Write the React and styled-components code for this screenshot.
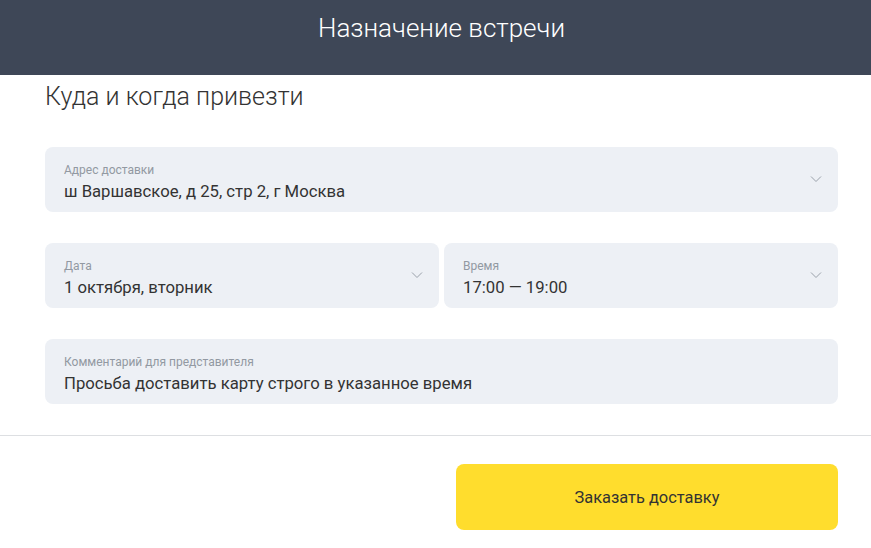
import React from "react"
import styled, { createGlobalStyle } from "styled-components"

const GlobalStyle = createGlobalStyle`
  body {
    margin: 0;
    background: #fff;
    font-family: Roboto, "Liberation Sans", sans-serif;
    color: #333;
  }
`

const Header = styled.header`
  height: 75px;
  background: #3e4757;
  display: flex;
  justify-content: center;
  padding: 11px 0 0 12px;
  box-sizing: border-box;
`

const HeaderTitle = styled.h1`
  margin: 0;
  font-size: 26px;
  font-weight: 300;
  line-height: 34px;
  color: #fff;
`

const Body = styled.main`
  padding: 6px 33px 0 45px;
`

const Heading = styled.h2`
  margin: 0 0 35px;
  font-size: 25px;
  font-weight: 300;
  line-height: 31px;
  color: #333;
`

const Fields = styled.div`
  display: flex;
  flex-direction: column;
  gap: 31px;
`

const Row = styled.div`
  display: grid;
  grid-template-columns: 1fr 1fr;
  gap: 5px;
`

const Field = styled.div`
  position: relative;
  height: 65px;
  box-sizing: border-box;
  padding: 16px 19px 0;
  background: #edf0f5;
  border-radius: 8px;
`

const Label = styled.div`
  font-size: 12px;
  line-height: 14px;
  color: #9299a2;
`

const Value = styled.div`
  margin-top: 4px;
  font-size: 16.7px;
  line-height: 21px;
  color: #333;
`

const Chevron = styled.svg`
  position: absolute;
  right: 16px;
  top: 28px;
  width: 12px;
  height: 8px;
`

const Divider = styled.hr`
  margin: 31px 0 0;
  border: none;
  border-top: 1px solid #dddfe2;
`

const Footer = styled.div`
  display: flex;
  justify-content: flex-end;
  padding: 28px 33px 0 0;
`

const Button = styled.button`
  width: 382px;
  height: 66px;
  border: none;
  border-radius: 8px;
  background: #ffdd2d;
  font-family: inherit;
  font-size: 16.4px;
  color: #333;
  cursor: pointer;
`

const Arrow = () => (
  <Chevron viewBox="0 0 12 8">
    <path d="M1 1.5l5 5 5-5" fill="none" stroke="#9aa1aa" strokeWidth="1" />
  </Chevron>
)

const SelectField = ({ label, value }) => (
  <Field>
    <Label>{label}</Label>
    <Value>{value}</Value>
    <Arrow />
  </Field>
)

const App = () => (
  <>
    <GlobalStyle />
    <Header>
      <HeaderTitle>Назначение встречи</HeaderTitle>
    </Header>
    <Body>
      <Heading>Куда и когда привезти</Heading>
      <Fields>
        <SelectField label="Адрес доставки" value="ш Варшавское, д 25, стр 2, г Москва" />
        <Row>
          <SelectField label="Дата" value="1 октября, вторник" />
          <SelectField label="Время" value="17:00 — 19:00" />
        </Row>
        <Field>
          <Label>Комментарий для представителя</Label>
          <Value>Просьба доставить карту строго в указанное время</Value>
        </Field>
      </Fields>
    </Body>
    <Divider />
    <Footer>
      <Button>Заказать доставку</Button>
    </Footer>
  </>
)

export default App
